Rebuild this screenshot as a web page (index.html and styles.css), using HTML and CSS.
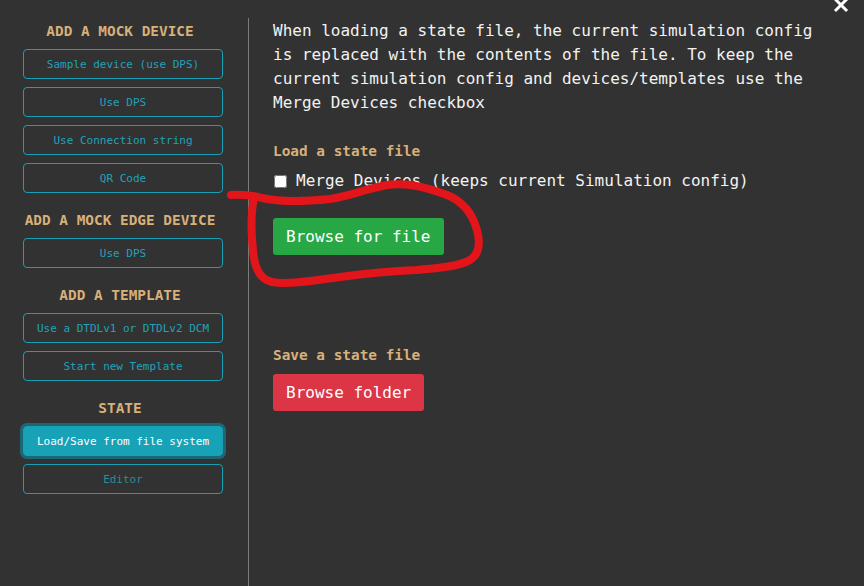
FILE: index.html
```html
<!DOCTYPE html>
<html lang="en">
<head>
<meta charset="utf-8">
<title>State</title>
<link rel="stylesheet" href="styles.css">
</head>
<body>
<div class="app">
  <nav class="sidebar">
    <section class="group">
      <h3 class="group-title">ADD A MOCK DEVICE</h3>
      <button class="side-btn">Sample device (use DPS)</button>
      <button class="side-btn">Use DPS</button>
      <button class="side-btn">Use Connection string</button>
      <button class="side-btn">QR Code</button>
    </section>
    <section class="group">
      <h3 class="group-title">ADD A MOCK EDGE DEVICE</h3>
      <button class="side-btn">Use DPS</button>
    </section>
    <section class="group">
      <h3 class="group-title">ADD A TEMPLATE</h3>
      <button class="side-btn">Use a DTDLv1 or DTDLv2 DCM</button>
      <button class="side-btn">Start new Template</button>
    </section>
    <section class="group">
      <h3 class="group-title">STATE</h3>
      <button class="side-btn active">Load/Save from file system</button>
      <button class="side-btn dim">Editor</button>
    </section>
  </nav>
  <main class="content">
    <p class="intro">When loading a state file, the current simulation config is replaced with the contents of the file. To keep the current simulation config and devices/templates use the Merge Devices checkbox</p>
    <h4 class="label load-label">Load a state file</h4>
    <label class="check-row"><input type="checkbox" class="check">Merge Devices (keeps current Simulation config)</label>
    <button class="action green">Browse for file</button>
    <h4 class="label save-label">Save a state file</h4>
    <button class="action red">Browse folder</button>
  </main>
</div>
<svg class="close" width="16" height="14" viewBox="0 0 16 14" aria-label="close">
  <path d="M2 0 L12 10 M12 0 L2 10" stroke="#ffffff" stroke-width="3" stroke-linecap="square" fill="none"/>
</svg>
<svg class="scribble" width="864" height="586" viewBox="0 0 864 586">
  <path d="M231 195 C 245 194, 255 196, 262 198 C 275 201, 300 202, 330 199 C 350 196, 365 189, 387 185 C 405 183, 420 185, 447 195 C 462 201, 472 212, 477 230 C 481 245, 478 255, 470 260 C 460 266, 440 268, 417 270 C 395 271, 370 273, 340 277 C 315 280, 290 285, 272 282 C 258 279, 254 265, 253 250 C 251 232, 251 212, 254 198" stroke="#e2151b" stroke-width="8" fill="none" stroke-linecap="round" stroke-linejoin="round"/>
</svg>
</body>
</html>
```

FILE: styles.css
```css
html, body {
  margin: 0;
  padding: 0;
  background: #323232;
  height: 100%;
  overflow: hidden;
}

body {
  font-family: "DejaVu Sans Mono", "Liberation Mono", monospace;
  color: #f0f0f0;
  position: relative;
}

.app {
  display: flex;
  align-items: flex-start;
  height: 586px;
}

.sidebar {
  width: 248px;
  flex: none;
  padding-top: 22px;
  box-sizing: border-box;
}

.group {
  display: flex;
  flex-direction: column;
  margin-top: 10px;
}

.group:first-child {
  margin-top: 0;
}

.group-title {
  width: 240px;
  margin: 0 0 9px;
  text-align: center;
  font-size: 14.4px;
  line-height: 18px;
  font-weight: bold;
  color: #d8b07a;
  letter-spacing: 0;
}

.side-btn {
  width: 200px;
  height: 30px;
  margin: 0 0 8px 23px;
  padding: 0;
  background: transparent;
  border: 1px solid #179fb5;
  border-radius: 4px;
  color: #1fa3b9;
  font-family: "DejaVu Sans Mono", "Liberation Mono", monospace;
  font-size: 11px;
  text-align: center;
}

.side-btn.active {
  background: #17a2b8;
  color: #ffffff;
  box-shadow: 0 0 0 3px rgba(23, 120, 140, 0.75);
}

.side-btn.dim {
  color: #2a8c9d;
}

.content {
  flex: 1;
  margin-top: 18px;
  border-left: 1px solid #7a7a7a;
  padding: 1px 0 0 24px;
  height: 568px;
  box-sizing: border-box;
  display: flex;
  flex-direction: column;
  align-items: flex-start;
}

.intro {
  margin: 0;
  max-width: 550px;
  font-size: 16px;
  line-height: 24px;
  color: #f2f2f2;
}

.label {
  margin: 0;
  font-size: 14.4px;
  line-height: 18px;
  font-weight: bold;
  color: #d8b07a;
}

.load-label {
  margin-top: 27px;
}

.save-label {
  margin-top: 91px;
}

.check-row {
  margin-top: 9px;
  display: flex;
  align-items: center;
  font-size: 16px;
  line-height: 24px;
  color: #f2f2f2;
}

.check {
  width: 13px;
  height: 13px;
  margin: 0 9px 0 1px;
}

.action {
  margin-top: 25px;
  height: 37px;
  padding: 0 13px;
  border: none;
  border-radius: 3px;
  color: #ffffff;
  font-family: "DejaVu Sans Mono", "Liberation Mono", monospace;
  font-size: 16px;
  line-height: 24px;
}

.action.green {
  background: #28a745;
}

.action.red {
  margin-top: 10px;
  background: #dc3545;
}

.close {
  position: absolute;
  top: 0;
  left: 834px;
}

.scribble {
  position: absolute;
  top: 0;
  left: 0;
  pointer-events: none;
}
```
